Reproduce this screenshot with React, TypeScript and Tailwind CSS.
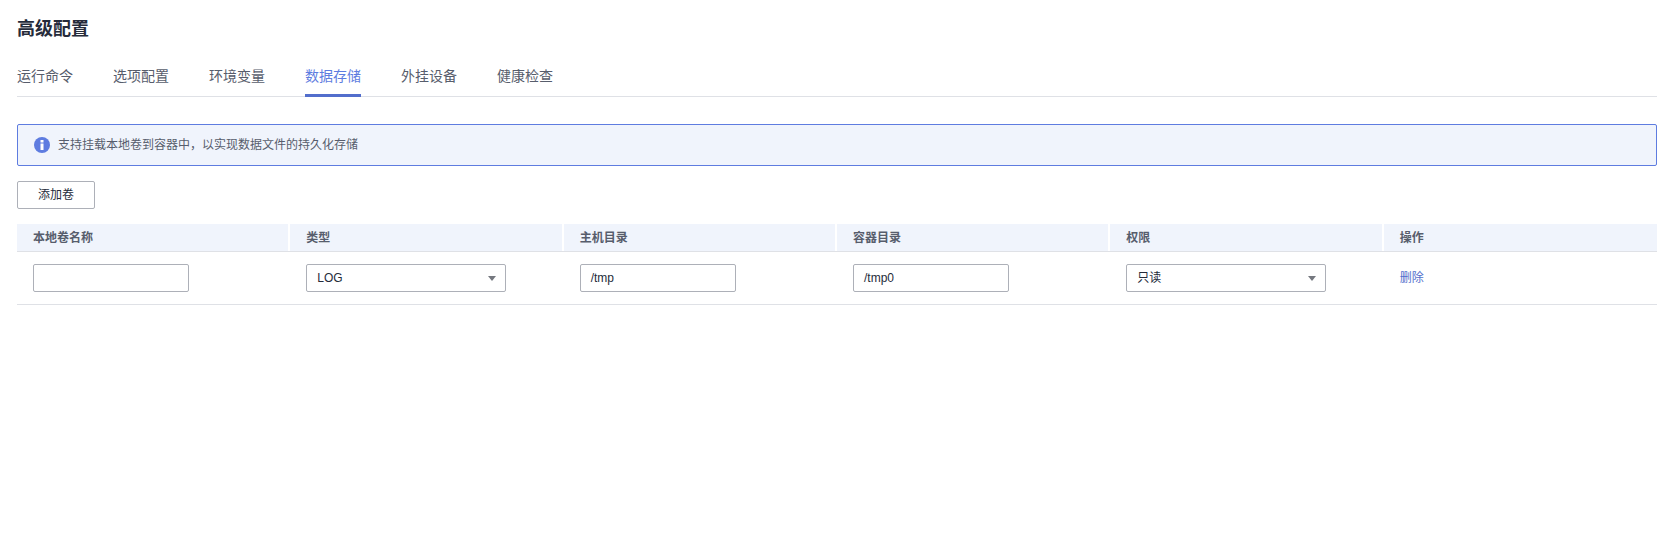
import React from 'react';

const FONT = "font-['Liberation_Sans','Noto_Sans_CJK_SC',sans-serif]";

const tabs = ['运行命令', '选项配置', '环境变量', '数据存储', '外挂设备', '健康检查'];
const columns = ['本地卷名称', '类型', '主机目录', '容器目录', '权限', '操作'];

const TextInput = ({ value }: { value?: string }) => (
  <div className="w-[156px] h-7 px-[10px] flex items-center rounded-[2px] border border-[#adb0b8] bg-white text-xs text-[#252b3a]">
    {value}
  </div>
);

const SelectBox = ({ value }: { value: string }) => (
  <div className="w-[200px] h-7 pl-[10px] pr-[9px] flex items-center justify-between rounded-[2px] border border-[#adb0b8] bg-white text-xs text-[#252b3a]">
    <span>{value}</span>
    <svg width="8" height="5" viewBox="0 0 8 5">
      <path d="M0 0h8L4 5z" fill="#75787f" />
    </svg>
  </div>
);

export default function App() {
  return (
    <div className={`${FONT} w-[1674px] h-[534px] bg-white pl-[17px] pr-[17px] pt-[18px]`}>
      {/* Title */}
      <h2 className="text-lg leading-[22px] font-bold text-[#252b3a]">高级配置</h2>

      {/* Tabs */}
      <div className="mt-[17px] flex gap-10 border-b border-[#dfe1e6] h-[40px]">
        {tabs.map((tab, i) => (
          <div
            key={tab}
            className={`h-[40px] pt-[8px] leading-[22px] text-sm ${
              i === 3 ? 'text-[#5e7ce0] border-b-[3px] border-[#526ecc]' : 'text-[#575d6c]'
            }`}
          >
            {tab}
          </div>
        ))}
      </div>

      {/* Info banner */}
      <div className="mt-[27px] h-[42px] px-4 flex items-center gap-2 rounded-[2px] border border-[#5e7ce0] bg-[#f0f4fc] text-xs text-[#575d6c]">
        <svg width="16" height="16" viewBox="0 0 16 16" className="shrink-0">
          <circle cx="8" cy="8" r="8" fill="#5e7ce0" />
          <rect x="6.5" y="3" width="3" height="2.5" fill="#fff" />
          <rect x="6.5" y="6.5" width="3" height="6.5" fill="#fff" />
        </svg>
        <span>支持挂载本地卷到容器中，以实现数据文件的持久化存储</span>
      </div>

      {/* Add button */}
      <button className="mt-[15px] block w-[78px] h-7 rounded-[2px] border border-[#adb0b8] bg-white text-xs text-[#252b3a]">
        添加卷
      </button>

      {/* Table */}
      <div className="mt-[15px]">
        <div className="grid grid-cols-6 h-7 border-b border-[#dfe1e6] bg-[#f0f4fc] text-xs font-semibold text-[#575d6c]">
          {columns.map((col, i) => (
            <div key={col} className={`pl-4 flex items-center ${i < 5 ? 'border-r-2 border-white' : ''}`}>
              {col}
            </div>
          ))}
        </div>
        <div className="grid grid-cols-6 h-[53px] border-b border-[#dfe1e6] items-center">
          <div className="pl-4"><TextInput /></div>
          <div className="pl-4"><SelectBox value="LOG" /></div>
          <div className="pl-4"><TextInput value="/tmp" /></div>
          <div className="pl-4"><TextInput value="/tmp0" /></div>
          <div className="pl-4"><SelectBox value="只读" /></div>
          <div className="pl-4 text-xs text-[#526ecc]">删除</div>
        </div>
      </div>
    </div>
  );
}
